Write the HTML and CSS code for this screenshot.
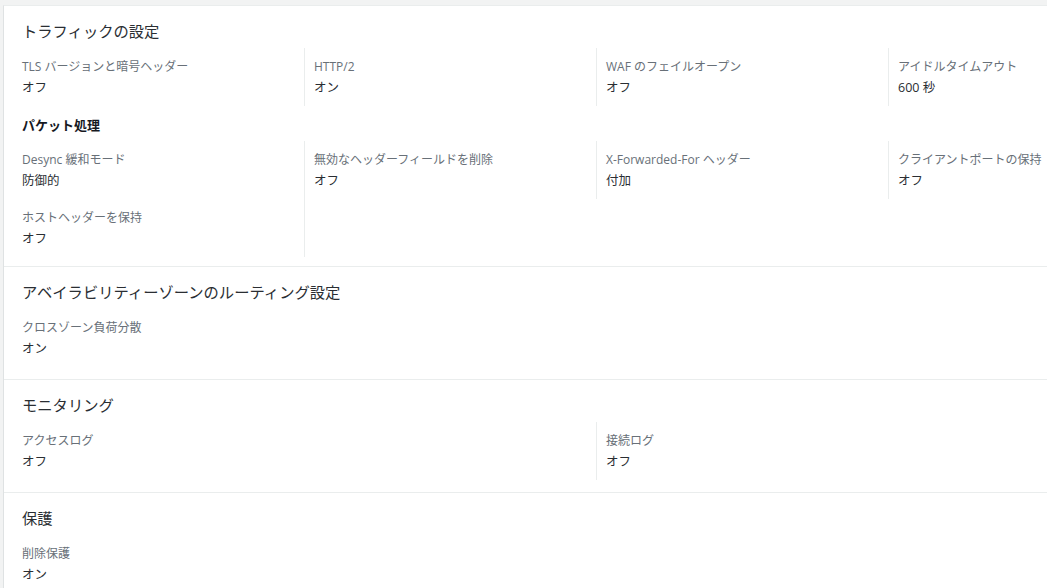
FILE: index.html
```html
<!DOCTYPE html>
<html lang="ja">
<head>
<meta charset="utf-8">
<title>設定</title>
<link rel="stylesheet" href="styles.css">
</head>
<body>
<div class="card">
  <section class="sec first">
    <h2 class="title">トラフィックの設定</h2>
    <div class="grid cols4">
      <div class="cell"><div class="label">TLS バージョンと暗号ヘッダー</div><div class="value">オフ</div></div>
      <div class="cell"><div class="label">HTTP/2</div><div class="value">オン</div></div>
      <div class="cell"><div class="label">WAF のフェイルオープン</div><div class="value">オフ</div></div>
      <div class="cell"><div class="label">アイドルタイムアウト</div><div class="value">600 秒</div></div>
    </div>
    <h3 class="sub">パケット処理</h3>
    <div class="grid cols4">
      <div class="cell"><div class="label">Desync 緩和モード</div><div class="value">防御的</div></div>
      <div class="cell"><div class="label">無効なヘッダーフィールドを削除</div><div class="value">オフ</div></div>
      <div class="cell"><div class="label">X-Forwarded-For ヘッダー</div><div class="value">付加</div></div>
      <div class="cell"><div class="label">クライアントポートの保持</div><div class="value">オフ</div></div>
      <div class="cell"><div class="label">ホストヘッダーを保持</div><div class="value">オフ</div></div>
      <div class="cell"></div>
    </div>
  </section>
  <section class="sec">
    <h2 class="title">アベイラビリティーゾーンのルーティング設定</h2>
    <div class="grid cols1">
      <div class="cell"><div class="label">クロスゾーン負荷分散</div><div class="value">オン</div></div>
    </div>
  </section>
  <section class="sec">
    <h2 class="title">モニタリング</h2>
    <div class="grid cols2">
      <div class="cell"><div class="label">アクセスログ</div><div class="value">オフ</div></div>
      <div class="cell"><div class="label">接続ログ</div><div class="value">オフ</div></div>
    </div>
  </section>
  <section class="sec">
    <h2 class="title">保護</h2>
    <div class="grid cols1">
      <div class="cell"><div class="label">削除保護</div><div class="value">オン</div></div>
    </div>
  </section>
</div>
</body>
</html>
```

FILE: styles.css
```css
html, body {
  margin: 0;
  padding: 0;
}
body {
  background: #f2f3f3;
  overflow: hidden;
  font-family: "Open Sans", "Noto Sans CJK JP", sans-serif;
  color: #16191f;
  height: 588px;
}
.card {
  margin: 5px 0 0 3px;
  width: 1240px;
  background: #ffffff;
  border-left: 1px solid #dfe2e3;
  border-top: 1px solid #eaeded;
}
.sec {
  padding: 14px 0 12px 18px;
  border-bottom: 1px solid #eaeded;
}
.sec.first {
  padding-bottom: 9px;
}
.title {
  margin: 0 0 6px 0;
  font-size: 15.3px;
  line-height: 22px;
  font-weight: 400;
  color: #2a2e33;
}
.sub {
  margin: 9px 0 6px 0;
  font-size: 13px;
  line-height: 20px;
  font-weight: 700;
  color: #16191f;
}
.grid {
  display: grid;
  margin-left: -10px;
}
.cols4 { grid-template-columns: repeat(4, 292px); }
.cols2 { grid-template-columns: repeat(2, 584px); }
.cols1 { grid-template-columns: 584px; }
.cell {
  border-left: 1px solid #eaeded;
  padding: 9px 0 7px 9px;
  min-height: 42px;
}
.cell:nth-child(4n+1), .cols2 .cell:nth-child(odd), .cols1 .cell {
  border-left-color: transparent;
}
.cols2 .cell:nth-child(even) {
  border-left-color: #eaeded;
}
.label {
  font-size: 12px;
  line-height: 20px;
  color: #687078;
}
.value {
  font-size: 12.5px;
  line-height: 22px;
  color: #2a2e33;
}
```
